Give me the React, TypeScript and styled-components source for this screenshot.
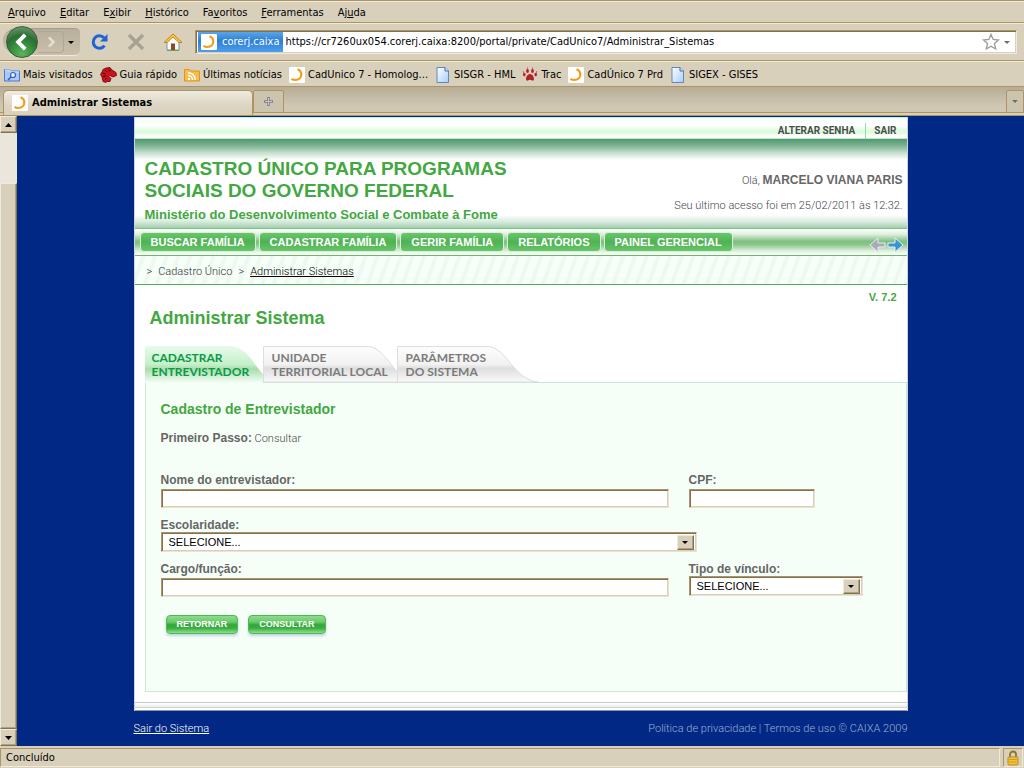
import React from "react";
import styled, { createGlobalStyle, css } from "styled-components";

const beige = "#d9d0bb";
const tan = "#ac9561";
const cream = "#f1e9dc";
const green = "#43a742";
const chromeFont = `"DejaVu Sans Condensed", "DejaVu Sans", sans-serif`;

const Global = createGlobalStyle`
  * { box-sizing: border-box; }
  body { margin: 0; font: 300 11px/16px Roboto, sans-serif; background: ${beige}; }
  button, input, select { font: inherit; color: inherit; margin: 0; }
  button { border: 0; padding: 0; background: none; }
  h1, h2, h3, p { margin: 0; }
  svg { display: block; flex: none; }
`;

const Window = styled.div`
  display: flex;
  flex-direction: column;
  min-height: 100vh;
`;

const ChromeBar = styled.div`
  display: flex;
  align-items: center;
  font-family: ${chromeFont};
  font-weight: 400;
  color: #000;
  background: ${beige};
  border-bottom: 1px solid ${tan};
  border-top: 1px solid ${cream};
`;

const MenuBar = styled(ChromeBar)`
  height: 23px;
  gap: 14px;
  padding: 2px 8px 0;
  border-top-color: ${tan};
  box-shadow: inset 0 1px 0 ${cream};
`;

const NavBar = styled(ChromeBar)`
  height: 38px;
  padding: 0 7px 0 3px;
`;

const BookmarkBar = styled(ChromeBar)`
  height: 26px;
  padding: 2px 4px 0;
  gap: 7px;
`;

const Bookmark = styled.a`
  display: flex;
  align-items: center;
  gap: 3px;
  color: #000;
  text-decoration: none;
  white-space: nowrap;
`;

const HistoryGroup = styled.div`
  display: flex;
  align-items: center;
  width: 77px;
  height: 28px;
  padding-left: 3px;
  border-radius: 14px 5px 5px 14px;
  background: linear-gradient(#b9af9d, #c9bfab);
  border-bottom: 1px solid ${cream};
  border-top: 1px solid #a59c8b;
`;

const BackButton = styled.button`
  display: grid;
  place-items: center;
  width: 32px;
  height: 32px;
  flex: none;
  border-radius: 50%;
  border: 1px solid #3c5a3d;
  background: radial-gradient(circle at 50% 90%, #5cb65c 0, #2f8238 45%, #2b6e35 60%, #7fa982 100%);
`;

const ForwardButton = styled.button`
  display: grid;
  place-items: center;
  width: 26px;
  height: 22px;
  border: 1px solid #b0a794;
  border-left: 0;
  border-radius: 0 4px 4px 0;
`;

const Caret = styled.span<{ $c?: string }>`
  width: 0;
  height: 0;
  border: 3px solid transparent;
  border-top-color: ${(p) => p.$c || "#000"};
  border-bottom: 0;
`;

const CaretButton = styled.button`
  display: grid;
  place-items: center;
  width: 14px;
  height: 22px;
`;

const ToolGroup = styled.div`
  display: flex;
  align-items: center;
  gap: 18px;
  margin: 0 12px 0 11px;
`;

const AddressBar = styled.div`
  display: flex;
  align-items: center;
  flex: 1;
  height: 24px;
  padding: 1px 2px 1px 1px;
  background: #fff;
  border: 1px solid ${cream};
  border-top-color: ${tan};
  border-left-color: ${tan};
  box-shadow: inset 1px 1px 0 #7d7258, inset -1px -1px 0 ${beige};
`;

const Identity = styled.span`
  display: flex;
  align-items: center;
  gap: 5px;
  height: 20px;
  margin-left: 1px;
  padding: 0 3px;
  color: #fff;
  background: linear-gradient(#5aa5ea, #2d7fd4 45%, #4b9fee);
`;

const UrlInput = styled.input`
  flex: 1;
  min-width: 0;
  border: 0;
  outline: 0;
  padding: 0 3px;
  background: transparent;
`;

const TabStrip = styled.div`
  display: flex;
  align-items: flex-end;
  height: 29px;
  padding-left: 3px;
  font-family: ${chromeFont};
  background: linear-gradient(#b7ad97, #d1c8b3 70%);
  border-bottom: 1px solid ${tan};
  box-shadow: inset 0 -1px 0 ${beige}, inset 0 -2px 0 ${beige}, inset 0 -3px 0 ${tan};
`;

const BrowserTab = styled.button`
  display: flex;
  align-items: center;
  gap: 4px;
  width: 250px;
  height: 25px;
  padding: 0 8px;
  font-weight: bold;
  color: #000;
  background: linear-gradient(#f0ebe0, #ddd5c3 60%, ${beige});
  border: 1px solid ${tan};
  border-bottom: 0;
  border-radius: 5px 5px 0 0;
`;

const StripButton = styled.button<{ $w: number }>`
  display: grid;
  place-items: center;
  width: ${(p) => p.$w}px;
  height: 23px;
  margin-bottom: 2px;
  background: #cdc4b0;
  border: 1px solid ${tan};
  border-radius: 2px 2px 0 0;
`;

const Spacer = styled.div`
  flex: 1;
`;

const Viewport = styled.div`
  display: flex;
  flex: 1;
  background: #002884;
`;

const Scrollbar = styled.div`
  display: flex;
  flex-direction: column;
  width: 17px;
  flex: none;
  background: #ebe6dc;
`;

const raised = css`
  background: ${beige};
  border: 1px solid ${cream};
  border-right-color: #7d7258;
  border-bottom-color: #7d7258;
  box-shadow: inset -1px -1px 0 #b3a17a;
`;

const ScrollButton = styled.button`
  ${raised}
  display: grid;
  place-items: center;
  height: 17px;
  flex: none;
`;

const ScrollThumb = styled.div`
  ${raised}
  flex: 1;
  margin-top: 50px;
`;

const Scroller = styled.div`
  flex: 1;
  padding: 1px 12px 8px;
`;

const Site = styled.div`
  max-width: 774px;
  margin: 0 auto;
`;

const Sheet = styled.div`
  background: #fff;
  border-left: 1px solid #cfd3dc;
  border-right: 1px solid #cfd3dc;
`;

const TopLinks = styled.nav`
  display: flex;
  align-items: center;
  justify-content: flex-end;
  height: 22px;
  padding: 5px 10px 0 0;
  border-top: 1px solid #cfe6dc;
  border-bottom: 1px solid #c6e3d0;
  background: linear-gradient(#f4fff6, #fff 30%, #fff 40%, #e0fbe0 60%, #dffbdf 72%, #fff 95%);
  font-size: 10px;
  font-weight: bold;
`;

const TopLink = styled.a`
  color: #4d4d4d;
  text-decoration: none;
  & + & {
    margin-left: 10px;
    padding-left: 8px;
    border-left: 1px solid #8fdcae;
  }
`;

const Banner = styled.header`
  display: flex;
  justify-content: space-between;
  height: 90px;
  padding: 19px 4px 0 10px;
  border-bottom: 1px solid #82c38a;
  background: linear-gradient(#4f9a6c, #7fb595 7px, #c9e0d1 14px, #fff 21px, #fff 76px, #d5eadb 83px, #a3cfaf);
`;

const SiteTitle = styled.h1`
  font: bold 19px/22px "Liberation Sans", Arial, sans-serif;
  color: ${green};
`;

const Ministry = styled.p`
  margin-top: 4px;
  font: bold 13px/18px "Liberation Sans", Arial, sans-serif;
  color: ${green};
`;

const Welcome = styled.div`
  padding-top: 10px;
  text-align: right;
  line-height: 25px;
  color: #444;
  b {
    font: bold 12px "Liberation Sans", Arial, sans-serif;
    color: #666;
  }
`;

const MainNav = styled.nav`
  display: flex;
  align-items: center;
  gap: 3px;
  height: 27px;
  padding: 0 4px 0 5px;
  border-bottom: 1px solid #6db86f;
  background: linear-gradient(#fff, #dff0df 20%, #80bf80 48%, #8cc68c 60%, #dff1df 85%, #fff);
`;

const NavButton = styled.button`
  height: 20px;
  padding: 0 10px;
  font: bold 11px/18px "Liberation Sans", Arial, sans-serif;
  color: #fff;
  background: linear-gradient(#6cc46d, #4db353 50%, #6ac46b);
  border: 1px solid #d4f2d4;
  border-radius: 4px;
  white-space: nowrap;
`;

const ArrowButton = styled.button`
  margin: 6px -1px 0 -1px;
`;

const Crumbs = styled.nav`
  display: flex;
  align-items: center;
  gap: 6px;
  height: 29px;
  padding: 3px 0 0 12px;
  color: #333;
  border-bottom: 1px solid #4fae55;
  background: repeating-linear-gradient(110deg, #f6fff8 0 5px, #eef8f0 7px 9px, #f6fff8 11px);
  a {
    color: #000;
  }
`;

const Main = styled.main`
  padding: 4px 0 10px 10px;
  border-bottom: 1px solid #c9c9c9;
`;

const Version = styled.p`
  padding-right: 10px;
  text-align: right;
  font: bold 11px/16px "Liberation Sans", Arial, sans-serif;
  color: ${green};
`;

const PageTitle = styled.h2`
  margin: 2px 0 17px 5px;
  font: bold 18px/22px "Liberation Sans", Arial, sans-serif;
  color: ${green};
`;

const Tabs = styled.div`
  display: flex;
  height: 36px;
`;

const Tab = styled.button<{ $w: number; $active?: boolean }>`
  position: relative;
  width: ${(p) => p.$w}px;
  padding: 2px 0 0 ${(p) => (p.$active ? 7 : 9)}px;
  text-align: left;
  font: bold 12px/14px Lato, sans-serif;
  color: ${(p) => (p.$active ? "#0a9a45" : "#7b7b7b")};
  white-space: pre-line;
`;

const TabShape = styled.svg`
  position: absolute;
  left: 0;
  top: 0;
  overflow: visible;
`;

const TabText = styled.span`
  position: relative;
`;

const Panel = styled.section`
  padding: 17px 15px 57px;
  background: #f5fff7;
  border: 1px solid #cbe5d8;
`;

const PanelTitle = styled.h3`
  font: bold 14px/18px "Liberation Sans", Arial, sans-serif;
  color: ${green};
`;

const Step = styled.p`
  margin-top: 13px;
  color: #444;
  b {
    font: bold 12px "Liberation Sans", Arial, sans-serif;
    color: #666;
  }
`;

const Form = styled.form`
  display: grid;
  grid-template-columns: minmax(0, 508px) minmax(0, 174px);
  gap: 10px 20px;
  margin-top: 26px;
`;

const Field = styled.div<{ $wide?: boolean }>`
  grid-column: ${(p) => (p.$wide ? "1 / -1" : "auto")};
`;

const Label = styled.label`
  display: block;
  font: bold 12px/14px "Liberation Sans", Arial, sans-serif;
  color: #666;
`;

const sunken = css`
  display: block;
  background: #fff;
  border: 1px solid #ece2d2;
  border-top-color: ${tan};
  border-left-color: ${tan};
  box-shadow: inset 1px 1px 0 #7d7258, inset -1px -1px 0 ${beige};
  border-radius: 0;
  outline: 0;
`;

const TextInput = styled.input<{ $w?: number }>`
  ${sunken}
  width: ${(p) => (p.$w ? p.$w + "px" : "100%")};
  height: 19px;
  margin-top: 2px;
  padding: 0 4px;
`;

const SelectBox = styled.div<{ $w: number }>`
  position: relative;
  max-width: ${(p) => p.$w}px;
`;

const Select = styled.select`
  ${sunken}
  width: 100%;
  height: 20px;
  padding: 0 22px 0 7px;
  font: 11px/16px "Liberation Sans", Arial, sans-serif;
  color: #000;
  appearance: none;
`;

const SelectArrow = styled.span`
  ${raised}
  position: absolute;
  right: 3px;
  top: 3px;
  display: grid;
  place-items: center;
  width: 17px;
  height: 15px;
  pointer-events: none;
`;

const Actions = styled.div`
  display: flex;
  grid-column: 1 / -1;
  gap: 10px;
  margin: 8px 0 0 5px;
`;

const ActionButton = styled.button`
  height: 19px;
  padding: 0 10px;
  font: bold 9px/17px "Liberation Sans", Arial, sans-serif;
  color: #fff;
  border: 1px solid #4cba53;
  border-radius: 4px;
  background: linear-gradient(#8ddc8c, #6bcb6c 35%, #33a53a 52%, #3cae42 72%, #8fe08d);
  box-shadow: 0 2px 3px #c0d3e0;
`;

const SheetEdge = styled.div`
  height: 8px;
  border-bottom: 1px solid #8a93b0;
  background: linear-gradient(#fff, #ececec 4px, #d2d2d2 4px, #d2d2d2 5px, #fff 5px);
`;

const Footer = styled.footer`
  display: flex;
  justify-content: space-between;
  margin-top: 10px;
  color: #9dafd6;
`;

const ExitLink = styled.a`
  color: #fff;
`;

const StatusBar = styled.div`
  display: flex;
  height: 22px;
  gap: 3px;
  padding: 2px 1px 1px 0;
  font-family: ${chromeFont};
  font-weight: 400;
  background: ${beige};
  color: #000;
`;

const StatusCell = styled.div<{ $grow?: boolean }>`
  display: flex;
  align-items: center;
  justify-content: ${(p) => (p.$grow ? "flex-start" : "center")};
  flex: ${(p) => (p.$grow ? "1" : "0 0 20px")};
  padding: 1px 0 0 ${(p) => (p.$grow ? 5 : 0)}px;
  border: 1px solid ${cream};
  border-top-color: ${tan};
  border-left-color: ${tan};
`;

const CaixaIcon = () => (
  <svg width="16" height="16" viewBox="0 0 16 16">
    <rect width="16" height="16" rx="1" fill="#fff" />
    <path d="M8.500 2.300A5.700 5.700 0 0 1 12.300 7.500c0 3.300-2.700 5.500-5.800 5.500-1.500 0-2.900-.4-4-1.200" fill="none" stroke="#f59c16" strokeWidth="2.200" />
  </svg>
);

const PageIcon = () => (
  <svg width="16" height="16" viewBox="0 0 16 16">
    <defs>
      <linearGradient id="pg" x2="1" y2="1">
        <stop offset="0" stopColor="#fff" />
        <stop offset="1" stopColor="#a9cdf7" />
      </linearGradient>
    </defs>
    <path d="M2 .5h8l3.500 3.500v11.500H2z" fill="url(#pg)" stroke="#5f88c2" />
    <path d="M10 .5V4h3.500" fill="#d5e6fb" stroke="#3f6bb0" />
  </svg>
);

const VisitedIcon = () => (
  <svg width="16" height="16" viewBox="0 0 16 16">
    <path d="M.5 14V2.500h5l1 1.500h9v10z" fill="#a9c8f8" stroke="#4a7ad8" />
    <path d="M1 3h4.500l1 2H15" fill="none" stroke="#dceaff" />
    <circle cx="9" cy="8" r="2.500" fill="#e6f0ff" stroke="#3161b8" strokeWidth="1.200" />
    <path d="M7 10l-3 3" stroke="#3161b8" strokeWidth="1.600" />
  </svg>
);

const DinoIcon = () => (
  <svg width="17" height="16" viewBox="0 0 17 16">
    <path d="M3 14.500L2 10 .5 7.500 2 5 3 2.500 6 1l4-.5 2 2.500 4 2.500.5 3L13 10l-3-1.500-1 1 2 2-1 3H7l-1 1z" fill="#d0131a" stroke="#5c0608" strokeWidth=".8" />
    <path d="M2.500 6l3 1M3 9.500l3-.5M5 3l2 2M5 12.500l2-1.500" stroke="#3c0406" />
    <circle cx="9.500" cy="3.500" r="1" fill="#3c0406" />
  </svg>
);

const FeedIcon = () => (
  <svg width="16" height="16" viewBox="0 0 16 16">
    <path d="M.5 14V2.500h5l1 1.500h9v10z" fill="#f8bd48" stroke="#dd9420" />
    <circle cx="5" cy="12" r="1.200" fill="#fff" />
    <path d="M4 8.500a4.500 4.500 0 0 1 4.500 4.500M4 5.700a7.300 7.300 0 0 1 7.300 7.300" fill="none" stroke="#fff" strokeWidth="1.400" />
  </svg>
);

const PawIcon = () => (
  <svg width="16" height="16" viewBox="0 0 16 16" fill="#b3202a">
    <path d="M8 7c2.500 0 4 3 4 5 0 1.800-1.400 2-2.200 1.300-1-.9-2.600-.9-3.600 0C5.400 14 4 13.800 4 12c0-2 1.500-5 4-5z" />
    <ellipse cx="5.500" cy="4" rx="1.400" ry="2.100" />
    <ellipse cx="10.500" cy="4" rx="1.400" ry="2.100" />
    <ellipse cx="2.300" cy="7.600" rx="1.300" ry="1.800" />
    <ellipse cx="13.700" cy="7.600" rx="1.300" ry="1.800" />
    <path d="M5 .5l.3 2 .7-2zM10 .5l.3 2 .7-2zM.5 4.500l1.300 1.500.2-1.500zM15.500 4.500L14.200 6 14 4.500z" />
  </svg>
);

const ReloadIcon = () => (
  <svg width="18" height="18" viewBox="0 0 18 18">
    <path d="M13.500 12.600A6.200 6.200 0 1 1 13 4.800" fill="none" stroke="#1d64d6" strokeWidth="3" />
    <path d="M16.500 1v7.500H9z" fill="#1d64d6" />
  </svg>
);

const StopIcon = () => (
  <svg width="18" height="18" viewBox="0 0 18 18">
    <path d="M2 2l14 14M16 2L2 16" stroke="#a8a092" strokeWidth="3.400" />
  </svg>
);

const HomeIcon = () => (
  <svg width="20" height="18" viewBox="0 0 20 18">
    <path d="M4 9v8h12V9l-6-6z" fill="#f7fafc" stroke="#7a94a8" />
    <path d="M10 1L1 9.500h3l6-5.500 6 5.500h3z" fill="#fbcb4a" stroke="#c88512" />
    <rect x="8" y="10.500" width="4" height="6.500" fill="#8e4a22" />
    <path d="M4 17.500h12" stroke="#6aa84f" />
  </svg>
);

const StarIcon = () => (
  <svg width="18" height="18" viewBox="0 0 18 18">
    <path d="M9 1.500l2.200 5 5.300.5-4 3.600 1.200 5.400L9 13.200 4.300 16l1.200-5.400-4-3.600 5.300-.5z" fill="#fff" stroke="#9a9a9a" strokeWidth="1.300" />
  </svg>
);

const LockIcon = () => (
  <svg width="12" height="16" viewBox="0 0 12 16">
    <path d="M3 8V4.500a3 3 0 0 1 6 0V8" fill="none" stroke="#8b7430" strokeWidth="1.800" />
    <rect x="1" y="7" width="10" height="8" rx="1" fill="#f0c53c" stroke="#b98a1a" />
    <path d="M2 9.500h8M2 12h8" stroke="#d19d20" />
  </svg>
);

const ArrowIcon = ({ right }: { right?: boolean }) => (
  <svg width="17" height="16" viewBox="0 0 17 16">
    <path
      d={right ? "M1 6H8V1L16 8 8 15v-5H1z" : "M16 6H9V1L1 8 9 15v-5h7z"}
      fill={right ? "#3a93d4" : "#a9a9b8"}
      stroke="#e8eef4"
    />
  </svg>
);

const Chevron = ({ left, size }: { left?: boolean; size: number }) => (
  <svg width={size} height={size} viewBox="0 0 14 14" fill="none" stroke={left ? "#fff" : "#e4ddd0"} strokeWidth="3">
    <path d={left ? "M9.500 1.500L4 7l5.500 5.500" : "M4.500 1.500L10 7l-5.500 5.500"} />
  </svg>
);

const menus = [
  ["", "A", "rquivo"],
  ["", "E", "ditar"],
  ["E", "x", "ibir"],
  ["", "H", "istórico"],
  ["Fa", "v", "oritos"],
  ["", "F", "erramentas"],
  ["Aj", "u", "da"],
];

const bookmarks: [() => React.JSX.Element, string][] = [
  [VisitedIcon, "Mais visitados"],
  [DinoIcon, "Guia rápido"],
  [FeedIcon, "Últimas notícias"],
  [CaixaIcon, "CadUnico 7 - Homolog..."],
  [PageIcon, "SISGR - HML"],
  [PawIcon, "Trac"],
  [CaixaIcon, "CadÚnico 7 Prd"],
  [PageIcon, "SIGEX - GISES"],
];

const sections = ["BUSCAR FAMÍLIA", "CADASTRAR FAMÍLIA", "GERIR FAMÍLIA", "RELATÓRIOS", "PAINEL GERENCIAL"];

const tabs = [
  { text: "CADASTRAR\nENTREVISTADOR", w: 118, flat: 84, active: true },
  { text: "UNIDADE\nTERRITORIAL LOCAL", w: 134, flat: 104 },
  { text: "PARÂMETROS\nDO SISTEMA", w: 142, flat: 90 },
];

export default function App() {
  return (
    <Window>
      <Global />
      <MenuBar as="nav">
        {menus.map(([a, u, b]) => (
          <button key={a + u + b}>
            {a}
            <u>{u}</u>
            {b}
          </button>
        ))}
      </MenuBar>
      <NavBar>
        <HistoryGroup>
          <BackButton aria-label="Voltar"><Chevron left size={18} /></BackButton>
          <ForwardButton aria-label="Avançar"><Chevron size={12} /></ForwardButton>
          <CaretButton aria-label="Páginas recentes"><Caret /></CaretButton>
        </HistoryGroup>
        <ToolGroup>
          <button aria-label="Recarregar"><ReloadIcon /></button>
          <button aria-label="Parar"><StopIcon /></button>
          <button aria-label="Página inicial"><HomeIcon /></button>
        </ToolGroup>
        <AddressBar>
          <Identity><CaixaIcon />corerj.caixa</Identity>
          <UrlInput aria-label="Endereço" defaultValue="https://cr7260ux054.corerj.caixa:8200/portal/private/CadUnico7/Administrar_Sistemas" />
          <button aria-label="Adicionar aos favoritos"><StarIcon /></button>
          <CaretButton aria-label="Histórico de endereços"><Caret $c="#6d6d6d" /></CaretButton>
        </AddressBar>
      </NavBar>
      <BookmarkBar>
        {bookmarks.map(([Icon, text]) => (
          <Bookmark href="#" key={text}><Icon />{text}</Bookmark>
        ))}
      </BookmarkBar>
      <TabStrip>
        <BrowserTab><CaixaIcon />Administrar Sistemas</BrowserTab>
        <StripButton $w={31} aria-label="Nova aba">
          <svg width="9" height="9" viewBox="0 0 9 9"><path d="M4.500 0v9M0 4.500h9" stroke="#7d7d80" strokeWidth="2.500" /><path d="M4.500 1v7M1 4.500h7" stroke="#c4c4c8" /></svg>
        </StripButton>
        <Spacer />
        <StripButton $w={18} aria-label="Listar abas"><Caret $c="#6d6d6d" /></StripButton>
      </TabStrip>
      <Viewport>
        <Scrollbar>
          <ScrollButton aria-label="Rolar para cima">
            <svg width="7" height="4" viewBox="0 0 7 4"><path d="M0 4h7L3.500 0z" /></svg>
          </ScrollButton>
          <ScrollThumb />
          <ScrollButton aria-label="Rolar para baixo">
            <svg width="7" height="4" viewBox="0 0 7 4"><path d="M0 0h7L3.500 4z" /></svg>
          </ScrollButton>
        </Scrollbar>
        <Scroller>
          <Site>
            <Sheet>
              <TopLinks>
                <TopLink href="#">ALTERAR SENHA</TopLink>
                <TopLink href="#">SAIR</TopLink>
              </TopLinks>
              <Banner>
                <div>
                  <SiteTitle>CADASTRO ÚNICO PARA PROGRAMAS<br />SOCIAIS DO GOVERNO FEDERAL</SiteTitle>
                  <Ministry>Ministério do Desenvolvimento Social e Combate à Fome</Ministry>
                </div>
                <Welcome>
                  <p>Olá, <b>MARCELO VIANA PARIS</b></p>
                  <p>Seu último acesso foi em 25/02/2011 às 12:32.</p>
                </Welcome>
              </Banner>
              <MainNav>
                {sections.map((s) => <NavButton key={s}>{s}</NavButton>)}
                <Spacer />
                <ArrowButton aria-label="Anterior"><ArrowIcon /></ArrowButton>
                <ArrowButton aria-label="Próximo"><ArrowIcon right /></ArrowButton>
              </MainNav>
              <Crumbs>
                <span>&gt;</span>
                <span>Cadastro Único</span>
                <span>&gt;</span>
                <a href="#">Administrar Sistemas</a>
              </Crumbs>
              <Main>
                <Version>V. 7.2</Version>
                <PageTitle>Administrar Sistema</PageTitle>
                <Tabs role="tablist">
                  {tabs.map((t) => (
                    <Tab key={t.text} role="tab" aria-selected={!!t.active} $w={t.w} $active={t.active}>
                      <TabShape width={t.w} height="37" viewBox={`0 0 ${t.w} 37`}>
                        <defs>
                          <linearGradient id={`g${t.w}`} x2="0" y2="1">
                            <stop offset="0" stopColor={t.active ? "#e8fbea" : "#fdfdfd"} />
                            <stop offset=".5" stopColor={t.active ? "#c4f0c9" : "#f3f1f1"} />
                            <stop offset=".62" stopColor={t.active ? "#a9dcae" : "#dedede"} />
                            <stop offset="1" stopColor={t.active ? "#f5fff7" : "#fafafa"} />
                          </linearGradient>
                        </defs>
                        <path
                          d={
                            t.active
                              ? "M0 37V0H84C102 0 108 18 118 28V37Z"
                              : `M.5 36V.5H${t.flat}c20 0 26 33 ${t.w === 134 ? "46 33l-15 2.500" : "51 35.500"}Z`
                          }
                          fill={`url(#g${t.w})`}
                          stroke={t.active ? "none" : "#dedede"}
                        />
                      </TabShape>
                      <TabText>{t.text}</TabText>
                    </Tab>
                  ))}
                </Tabs>
                <Panel>
                  <PanelTitle>Cadastro de Entrevistador</PanelTitle>
                  <Step><b>Primeiro Passo:</b> Consultar</Step>
                  <Form onSubmit={(e) => e.preventDefault()}>
                    <Field>
                      <Label htmlFor="nome">Nome do entrevistador:</Label>
                      <TextInput id="nome" />
                    </Field>
                    <Field>
                      <Label htmlFor="cpf">CPF:</Label>
                      <TextInput id="cpf" $w={126} />
                    </Field>
                    <Field $wide>
                      <Label htmlFor="escolaridade">Escolaridade:</Label>
                      <SelectBox $w={536}>
                        <Select id="escolaridade"><option>SELECIONE...</option></Select>
                        <SelectArrow><Caret /></SelectArrow>
                      </SelectBox>
                    </Field>
                    <Field>
                      <Label htmlFor="cargo">Cargo/função:</Label>
                      <TextInput id="cargo" />
                    </Field>
                    <Field>
                      <Label htmlFor="vinculo">Tipo de vínculo:</Label>
                      <SelectBox $w={174}>
                        <Select id="vinculo"><option>SELECIONE...</option></Select>
                        <SelectArrow><Caret /></SelectArrow>
                      </SelectBox>
                    </Field>
                    <Actions>
                      <ActionButton type="button">RETORNAR</ActionButton>
                      <ActionButton type="submit">CONSULTAR</ActionButton>
                    </Actions>
                  </Form>
                </Panel>
              </Main>
              <SheetEdge />
            </Sheet>
            <Footer>
              <ExitLink href="#">Sair do Sistema</ExitLink>
              <span>Política de privacidade | Termos de uso © CAIXA 2009</span>
            </Footer>
          </Site>
        </Scroller>
      </Viewport>
      <StatusBar>
        <StatusCell $grow>Concluído</StatusCell>
        <StatusCell><LockIcon /></StatusCell>
      </StatusBar>
    </Window>
  );
}
